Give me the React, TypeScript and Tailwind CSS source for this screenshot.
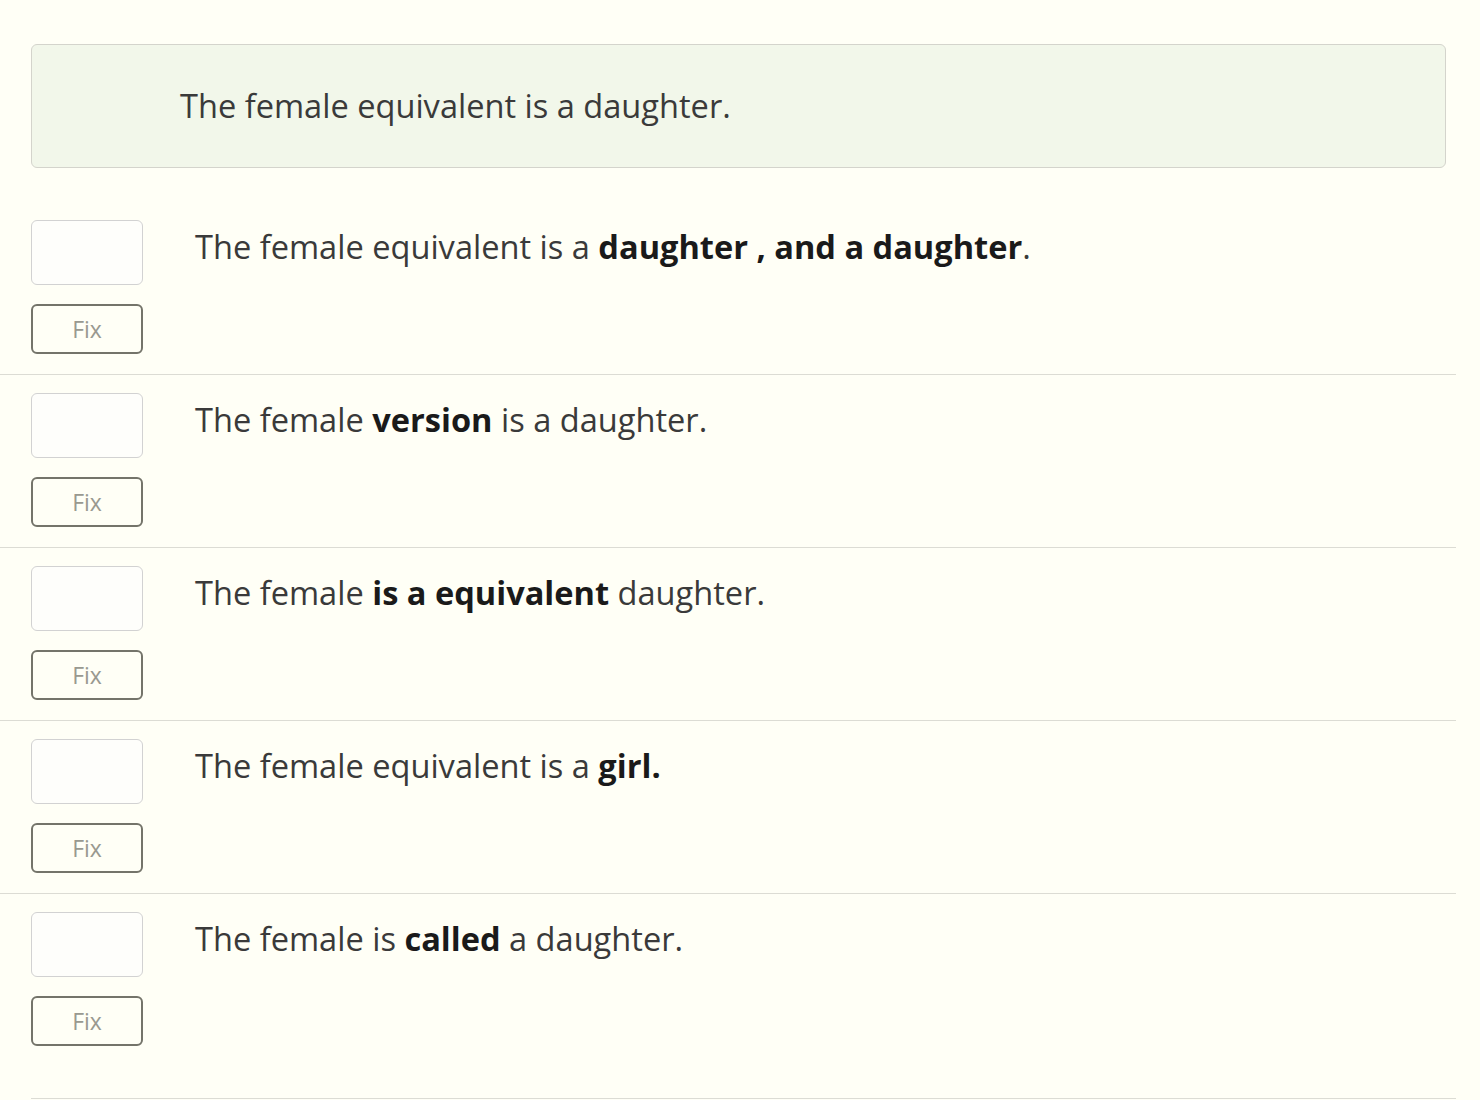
const rows: { parts: { t: string; b?: boolean }[] }[] = [
  {
    parts: [
      { t: 'The female equivalent is a ' },
      { t: 'daughter , and a daughter', b: true },
      { t: '.' },
    ],
  },
  { parts: [{ t: 'The female ' }, { t: 'version', b: true }, { t: ' is a daughter.' }] },
  { parts: [{ t: 'The female ' }, { t: 'is a equivalent', b: true }, { t: ' daughter.' }] },
  { parts: [{ t: 'The female equivalent is a ' }, { t: 'girl.', b: true }] },
  { parts: [{ t: 'The female is ' }, { t: 'called', b: true }, { t: ' a daughter.' }] },
];

function FixRow({ parts, last }: { parts: { t: string; b?: boolean }[]; last: boolean }) {
  return (
    <div
      className={
        last
          ? 'ml-[31px] mr-[24px] flex border-b border-[#dcdcd4] pt-[18px] pb-[52px]'
          : 'mr-[24px] flex border-b border-[#dcdcd4] pt-[18px] pb-[20px]'
      }
    >
      <div className={last ? 'flex w-[112px] flex-col gap-[19px]' : 'ml-[31px] flex w-[112px] flex-col gap-[19px]'}>
        <input
          type="text"
          className="h-[65px] w-[112px] rounded-[6px] border border-[#d2d2d2] bg-[#fefefb] outline-none"
        />
        <button className="h-[50px] w-[112px] rounded-[6px] border-2 border-[#74746a] bg-transparent text-[23px] text-[#999990]">
          Fix
        </button>
      </div>
      <p className="ml-[52px] mt-[4px] text-[32.6px] leading-[46px] text-[#3a3a3a]">
        {parts.map((p, i) =>
          p.b ? (
            <b key={i} className="font-bold text-[#1a1a1a]">
              {p.t}
            </b>
          ) : (
            <span key={i}>{p.t}</span>
          )
        )}
      </p>
    </div>
  );
}

export default function App() {
  return (
    <div
      className="min-h-[1100px] w-[1480px] bg-[#fffff6] pt-[44px]"
      style={{ fontFamily: '"Open Sans", "Noto Sans", sans-serif' }}
    >
      <div className="ml-[31px] mr-[34px] flex h-[124px] items-center rounded-[6px] border border-[#d4d4cc] bg-[#f2f7ea] pl-[148px]">
        <p className="text-[32.6px] text-[#3a3a3a]">The female equivalent is a daughter.</p>
      </div>
      <div className="mt-[34px]">
        {rows.map((r, i) => (
          <FixRow key={i} parts={r.parts} last={i === rows.length - 1} />
        ))}
      </div>
    </div>
  );
}
